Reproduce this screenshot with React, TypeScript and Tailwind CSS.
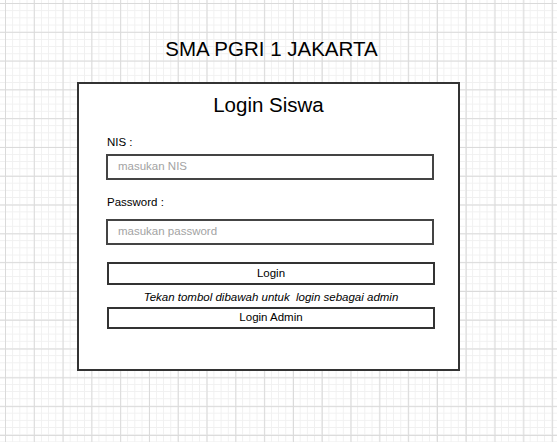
export default function App() {
  return (
    <div className="h-[442px] w-full overflow-hidden bg-white bg-[linear-gradient(to_right,#dadada_1px,transparent_1px),linear-gradient(to_bottom,#dadada_1px,transparent_1px),linear-gradient(to_right,#f0f0f0_1px,transparent_1px),linear-gradient(to_bottom,#f0f0f0_1px,transparent_1px)] bg-size-[28.8px_28.8px,28.8px_28.8px,7.2px_7.2px,7.2px_7.2px] bg-position-[5px_3px,5px_3px,5px_3px,5px_3px] font-['Liberation_Sans',Arial,sans-serif] text-black">
      <h1 className="pt-[37px] pr-[14px] text-center text-[20.5px] leading-[24px]">SMA PGRI 1 JAKARTA</h1>

      <div className="ml-[77px] mt-[21px] h-[289px] w-[383px] border-2 border-[#333] bg-white">
        <h2 className="mt-[9px] text-center text-[20.5px] leading-[24px]">Login Siswa</h2>

        <div className="pl-[27px]">
          <p className="mt-[18px] pl-[1px] text-[11.5px] leading-[14px]">NIS :</p>
          <div className="mt-[5px] flex h-[26px] w-[328px] items-center border-2 border-[#444] pl-[10px] text-[11.5px] text-[#a3a3a3]">
            masukan NIS
          </div>

          <p className="mt-[15px] pl-[1px] text-[11.5px] leading-[14px]">Password :</p>
          <div className="mt-[10px] flex h-[26px] w-[328px] items-center border-2 border-[#444] pl-[10px] text-[11.5px] text-[#a3a3a3]">
            masukan password
          </div>

          <button className="ml-[1px] mt-[17px] flex h-[23px] w-[328px] items-center justify-center border-2 border-[#333] text-[11.5px]">
            Login
          </button>
          <p className="ml-[1px] mt-[5px] w-[328px] whitespace-pre text-center text-[11.5px] italic leading-[14px]">
            Tekan tombol dibawah untuk  login sebagai admin
          </p>
          <button className="ml-[1px] mt-[3px] flex h-[22px] w-[328px] items-center justify-center border-2 border-[#333] text-[11.5px]">
            Login Admin
          </button>
        </div>
      </div>
    </div>
  );
}
